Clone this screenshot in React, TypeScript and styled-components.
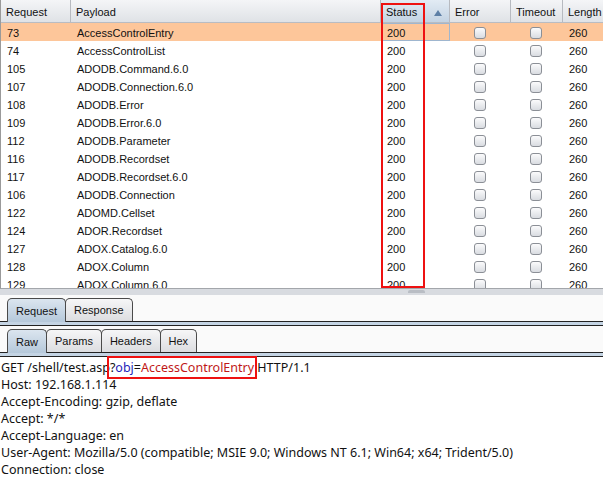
import React from "react";
import styled, { createGlobalStyle } from "styled-components";

const Global = createGlobalStyle`
  html, body { margin: 0; padding: 0; background: #ffffff; }
  body { font-family: "Liberation Sans", Arial, sans-serif; }
`;

const COLS = "70px 310px 69px 61px 52px 60px";

const Page = styled.div`
  width: 603px;
  height: 489px;
  overflow: hidden;
  position: relative;
  display: flex;
  flex-direction: column;
  background: #ffffff;
`;

const Table = styled.div`
  position: relative;
  height: 289px;
  box-sizing: border-box;
  overflow: hidden;
  border-left: 1px solid #9a9a9a;
  border-bottom: 1px solid #a3a6ab;
  background: #ffffff;
  flex: none;
`;

const HeaderRow = styled.div`
  display: grid;
  grid-template-columns: ${COLS};
  height: 23px;
  border-bottom: 1px solid #b9bcc2;
  box-sizing: border-box;
  background: linear-gradient(#f4f5f7, #dfe2e6);
`;

const HeaderCell = styled.div<{ $active?: boolean }>`
  position: relative;
  display: flex;
  align-items: center;
  padding-left: 5px;
  padding-top: 1px;
  font-size: 11px;
  color: #111;
  border-right: 1px solid #b7bac0;
  background: ${(p) => (p.$active ? "linear-gradient(#e2ebf4, #c3d3e3)" : "transparent")};
`;

const SortArrow = styled.span`
  position: absolute;
  right: 7px;
  top: 10px;
  width: 0;
  height: 0;
  border-left: 4px solid transparent;
  border-right: 4px solid transparent;
  border-bottom: 6px solid #5d7fa6;
`;

const Row = styled.div<{ $selected?: boolean }>`
  display: grid;
  grid-template-columns: ${COLS};
  height: 18px;
  background: ${(p) => (p.$selected ? "#fdc69a" : "#ffffff")};
`;

const Cell = styled.div<{ $center?: boolean; $focus?: boolean }>`
  display: flex;
  align-items: center;
  justify-content: ${(p) => (p.$center ? "center" : "flex-start")};
  padding-left: ${(p) => (p.$center ? "0" : "5px")};
  padding-top: 1px;
  font-size: 11px;
  color: #111;
  box-sizing: border-box;
  border: ${(p) => (p.$focus ? "1px solid #9fb6cf" : "1px solid transparent")};
`;

const Check = styled.span`
  width: 10px;
  height: 10px;
  border: 1px solid #8b8f96;
  border-radius: 3px;
  background: linear-gradient(#fbfbfc, #d9dce1);
  margin-left: -2px;
`;

const StatusMark = styled.div`
  position: absolute;
  left: 380px;
  top: 3px;
  width: 44px;
  height: 285px;
  border: 2px solid #ee1111;
  box-sizing: border-box;
  pointer-events: none;
`;

const Splitter = styled.div`
  height: 6px;
  background: #d8dbe0;
  display: flex;
  justify-content: center;
  flex: none;
`;

const Grip = styled.div`
  width: 17px;
  height: 3px;
  margin-left: 230px;
  margin-top: 1px;
  border-radius: 2px 2px 0 0;
  background: #b9bdc4;
`;

const Lower = styled.div`
  flex: 1;
  display: flex;
  flex-direction: column;
  background: #fafafa;
`;

const TabStrip = styled.div`
  display: flex;
  align-items: flex-end;
  padding-left: 7px;
  height: 27px;
  box-sizing: border-box;
  border-bottom: 1px solid #222;
  flex: none;
`;

const Tab = styled.div<{ $active?: boolean }>`
  box-sizing: border-box;
  padding: 0 8px 0 8px;
  display: flex;
  align-items: center;
  font-size: 11px;
  color: #111;
  border: 1px solid #4a4a4a;
  border-bottom: none;
  border-radius: 5px 5px 0 0;
  margin-bottom: ${(p) => (p.$active ? "-1px" : "0")};
  height: ${(p) => (p.$active ? "24px" : "23px")};
  background: ${(p) =>
    p.$active ? "linear-gradient(#dbe5ef, #b5c8da)" : "linear-gradient(#f6f6f7, #dcdde0)"};
  & + & { margin-left: -1px; }
`;

const Band = styled.div`
  height: 4px;
  box-sizing: border-box;
  background: #c4d4e4;
  border-bottom: 1px solid #222;
  flex: none;
`;

const Editor = styled.div`
  flex: 1;
  background: #ffffff;
  padding: 2px 0 0 1px;
  font-family: "Noto Sans", "Noto Sans CJK SC", sans-serif;
  font-size: 12.5px;
  line-height: 17px;
  color: #111;
  white-space: pre;
`;

const Line = styled.div``;

const Mark = styled.span`
  outline: 2px solid #ee1111;
  outline-offset: 1px;
`;

const Key = styled.span`
  color: #1f1fb8;
`;

const Val = styled.span`
  color: #c01818;
`;

const rows: [string, string][] = [
  ["73", "AccessControlEntry"],
  ["74", "AccessControlList"],
  ["105", "ADODB.Command.6.0"],
  ["107", "ADODB.Connection.6.0"],
  ["108", "ADODB.Error"],
  ["109", "ADODB.Error.6.0"],
  ["112", "ADODB.Parameter"],
  ["116", "ADODB.Recordset"],
  ["117", "ADODB.Recordset.6.0"],
  ["106", "ADODB.Connection"],
  ["122", "ADOMD.Cellset"],
  ["124", "ADOR.Recordset"],
  ["127", "ADOX.Catalog.6.0"],
  ["128", "ADOX.Column"],
  ["129", "ADOX.Column.6.0"],
];

export default function App() {
  return (
    <Page>
      <Global />
      <Table>
        <HeaderRow>
          <HeaderCell>Request</HeaderCell>
          <HeaderCell>Payload</HeaderCell>
          <HeaderCell $active>
            Status
            <SortArrow />
          </HeaderCell>
          <HeaderCell>Error</HeaderCell>
          <HeaderCell>Timeout</HeaderCell>
          <HeaderCell>Length</HeaderCell>
        </HeaderRow>
        {rows.map(([id, payload], i) => (
          <Row key={id} $selected={i === 0}>
            <Cell>{id}</Cell>
            <Cell>{payload}</Cell>
            <Cell $focus={i === 0}>200</Cell>
            <Cell $center>
              <Check />
            </Cell>
            <Cell $center>
              <Check />
            </Cell>
            <Cell>260</Cell>
          </Row>
        ))}
        <StatusMark />
      </Table>
      <Splitter>
        <Grip />
      </Splitter>
      <Lower>
        <TabStrip>
          <Tab $active>Request</Tab>
          <Tab>Response</Tab>
        </TabStrip>
        <Band />
        <TabStrip>
          <Tab $active>Raw</Tab>
          <Tab>Params</Tab>
          <Tab>Headers</Tab>
          <Tab>Hex</Tab>
        </TabStrip>
        <Band />
        <Editor>
          <Line>
            GET /shell/test.asp
            <Mark>
              ?<Key>obj</Key>=<Val>AccessControlEntry</Val>
            </Mark>{" "}
            HTTP/1.1
          </Line>
          <Line>Host: 192.168.1.114</Line>
          <Line>Accept-Encoding: gzip, deflate</Line>
          <Line>Accept: */*</Line>
          <Line>Accept-Language: en</Line>
          <Line>User-Agent: Mozilla/5.0 (compatible; MSIE 9.0; Windows NT 6.1; Win64; x64; Trident/5.0)</Line>
          <Line>Connection: close</Line>
        </Editor>
      </Lower>
    </Page>
  );
}
